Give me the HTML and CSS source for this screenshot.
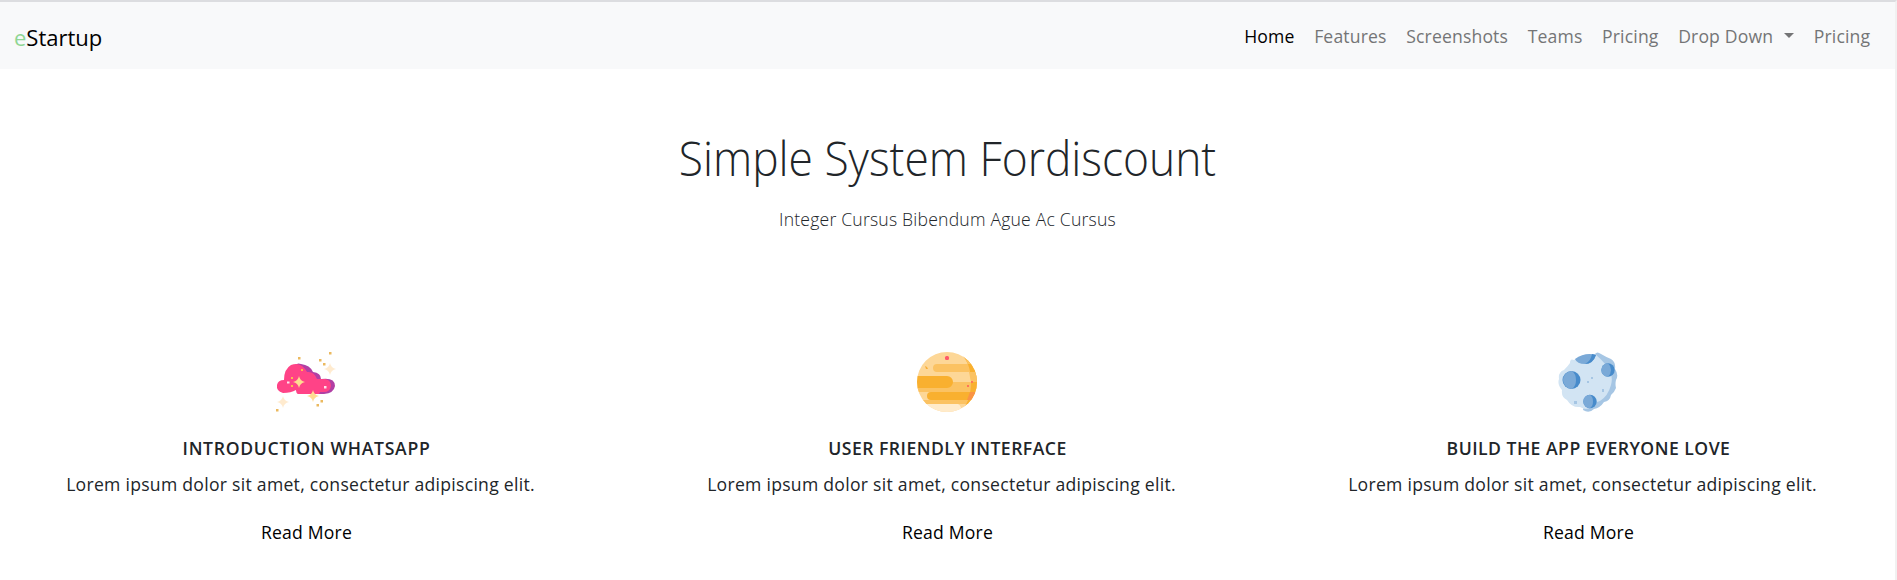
FILE: index.html
```
<!DOCTYPE html>
<html lang="en">
<head>
<meta charset="utf-8">
<title>eStartup</title>
<link rel="stylesheet" href="styles.css">
</head>
<body>
<div class="page">
<header class="navbar">
  <a class="brand"><span class="brand-accent">e</span>Startup</a>
  <nav class="nav">
    <a class="nav-link active">Home</a>
    <a class="nav-link">Features</a>
    <a class="nav-link">Screenshots</a>
    <a class="nav-link">Teams</a>
    <a class="nav-link">Pricing</a>
    <a class="nav-link dropdown">Drop Down</a>
    <a class="nav-link">Pricing</a>
  </nav>
</header>
<main>
  <section class="intro">
    <h1 class="headline">Simple System Fordiscount</h1>
    <p class="tagline">Integer Cursus Bibendum Ague Ac Cursus</p>
  </section>
  <section class="features">
    <article class="feature">
      <svg class="icon" viewBox="0 0 60 60">
        <path fill="#b13fa4" d="M13 23Q18 9 25 12Q34 13 37 20Q45 21 45 27Q59 25 59 34Q58 41 48 42H22Z"/>
        <path fill="#ff4387" d="M7 41Q0 39 1 33Q2 28 8 28Q8 17 15 13Q25 9 31 20Q38 19 41 27H49Q55 28 55 34Q54 40 48 40H44L43 42H22Q20 41 20 38Q15 41 7 41Z"/>
        <path fill="#ffdc91" d="M23 24Q24 29 29 30Q24 31 23 36Q22 31 17 30Q22 29 23 24ZM37 38Q38 43 43 44Q38 45 37 50Q36 45 31 44Q36 43 37 38Z"/>
        <path fill="#ffebcf" d="M54 11Q55 16 60 17Q55 18 54 23Q53 18 48 17Q53 16 54 11ZM7 44Q8 49 13 50Q8 51 7 56Q6 51 1 50Q6 49 7 44Z"/>
        <path fill="#ebb95f" d="M22 5h2.500v2.500h-2.500zM53 0h2.500v2.500h-2.500zM43 7h2.500v2.500h-2.500zM47 11h2.500v2.500h-2.500zM44.500 48h2.500v2.500h-2.500zM40.500 52h2.500v2.500h-2.500zM0 57h2.500v2.500H0z"/>
        <path fill="#ffb84f" d="M25 17h2v2h-2zM15 25h2v2h-2zM15 33h2v2h-2z"/><path fill="#ffe4ec" d="M11 29.500h2.500v2h-2.500zM48 34h2.500v2.500h-2.500z"/>
      </svg>
      <h2 class="feature-title wide">INTRODUCTION WHATSAPP</h2>
      <p class="feature-text">Lorem ipsum dolor sit amet, consectetur adipiscing elit.</p>
      <a class="more">Read More</a>
    </article>
    <article class="feature">
      <svg class="icon" viewBox="0 0 60 60">
        <clipPath id="disc"><circle cx="30" cy="30" r="30"/></clipPath>
        <g clip-path="url(#disc)">
          <path fill="#fdd797" d="M0 0h60v60H0z"/>
          <path fill="#fbc262" d="M60 12H20a4 4 0 0 0 0 8H60zM30 30h30v10H30z"/>
          <path fill="#f9b02f" d="M0 24h30a6 6 0 0 1 0 12H0zM60 40H14a4 4 0 0 0 0 8H60z"/>
          <path fill="#fbc262" d="M0 36h36v4H0zM0 48h60v4H0z"/>
          <path fill="#ffebcb" d="M0 52h41q4 2 3 8H0z"/>
          <path fill="#f9b02f" d="M42 0q12 10 12 30T43 60H60V0z"/>
          <path fill="#fbc262" d="M40 0q8 4 11 12h9V0zM52 20h8v10h-6z"/>
          <path fill="#fa9345" d="M53 40h7v8H50z"/>
          <rect fill="#ff596a" x="28" y="4" width="4" height="4" rx="1.5"/>
          <path fill="#f9ae37" d="M8 14l2 1 1 2-2 0z"/><path fill="#ff7458" d="M54 29h2v2h-2zM50 33h2v2h-2z"/>
        </g>
      </svg>
      <h2 class="feature-title">USER FRIENDLY INTERFACE</h2>
      <p class="feature-text">Lorem ipsum dolor sit amet, consectetur adipiscing elit.</p>
      <a class="more">Read More</a>
    </article>
    <article class="feature">
      <svg class="icon" viewBox="0 0 60 60">
        <path fill="#a6c6e4" d="M37 2Q39-1 43 2Q48 5 53 7Q58 10 57 17Q61 23 58 28Q57 32 58 36Q56 41 53 43Q52 49 46 50Q42 56 36 57Q31 62 25 58L33 20Z"/>
        <path fill="#d2e4f3" d="M37 2Q42 6 48 13Q56 23 53 33Q50 44 42 49Q34 51 32 55Q29 59 22 55Q14 56 9 48Q3 45 4 38Q-1 32 1 27Q0 20 6 18Q10 14 12 11Q12 6 16 8Q23 2 37 2Z"/>
        <path fill="#7aa9d7" d="M17 7Q27 0 38 3Q35 12 27 12Q19 12 17 7Z"/><path fill="#478bcb" d="M34 2L38 3Q35 12 27 12Q33 9 34 2Z"/>
        <circle fill="#478bcb" cx="13.5" cy="28" r="9"/><path fill="#7aa9d7" d="M14 19Q18 22 18 28T14 37A9 9 0 0 1 14 19Z"/>
        <circle fill="#478bcb" cx="50" cy="18" r="6.7"/><path fill="#7aa9d7" d="M50 11.3Q53 14 53 18T50 24.7A6.7 6.7 0 0 1 50 11.3Z"/>
        <circle fill="#478bcb" cx="32" cy="49.500" r="6.7"/><path fill="#7aa9d7" d="M32 42.800Q35 45 35 49.500T32 56.200A6.7 6.7 0 0 1 32 42.800Z"/>
        <path fill="#a6c6e4" d="M33 25h2v2h-2zM29 29h2v2h-2zM44 37h2v3h-2zM16 49h3v3h-3z"/>
      </svg>
      <h2 class="feature-title">BUILD THE APP EVERYONE LOVE</h2>
      <p class="feature-text">Lorem ipsum dolor sit amet, consectetur adipiscing elit.</p>
      <a class="more">Read More</a>
    </article>
  </section>
</main>
</div>
</body>
</html>
```
FILE: styles.css
```
* { box-sizing: border-box; }
body { margin: 0; background: #fff; color: #212529; font-family: "Open Sans", "Noto Sans", sans-serif; font-size: 17.6px; line-height: 1.5; }
.page { height: 580px; overflow: hidden; border-top: 2px solid #dcdde0; border-right: 2px solid #f1f1f1; }
.navbar { display: flex; align-items: center; justify-content: space-between; height: 67px; padding: 2px 15px 0 14px; background: #f8f9fa; }
.brand { padding-top: 2px; font-size: 22px; color: #000; }
.brand-accent { color: #8fd694; }
.nav { display: flex; }
.nav-link { padding: 0 9.8px; color: #747576; letter-spacing: .15px; }
.nav-link.active { color: #000; }
.dropdown::after { content: ""; display: inline-block; margin-left: 11px; vertical-align: 5px; border: 5px solid transparent; border-top-color: currentColor; border-bottom: 0; }
.intro { text-align: center; padding-top: 57px; }
.headline { margin: 0; font-size: 47px; font-weight: 300; line-height: 65px; transform: scaleX(.943); }
.tagline { margin: 15px 0 0; font-weight: 300; letter-spacing: .2px; }
.features { display: grid; grid-template-columns: repeat(3, 641px); justify-content: center; margin-top: 120px; }
.feature { display: flex; flex-direction: column; align-items: center; }
.icon { width: 60px; height: 60px; margin-right: 1px; }
.feature-title { margin: 26px 0 0; font-size: 17.6px; font-weight: 600; line-height: 21px; letter-spacing: .48px; }
.feature-title.wide { letter-spacing: .7px; }
.feature-text { margin: 12px 0 0; padding-right: 12px; letter-spacing: .27px; }
.more { margin-top: 21px; color: #000; letter-spacing: .2px; }
```
